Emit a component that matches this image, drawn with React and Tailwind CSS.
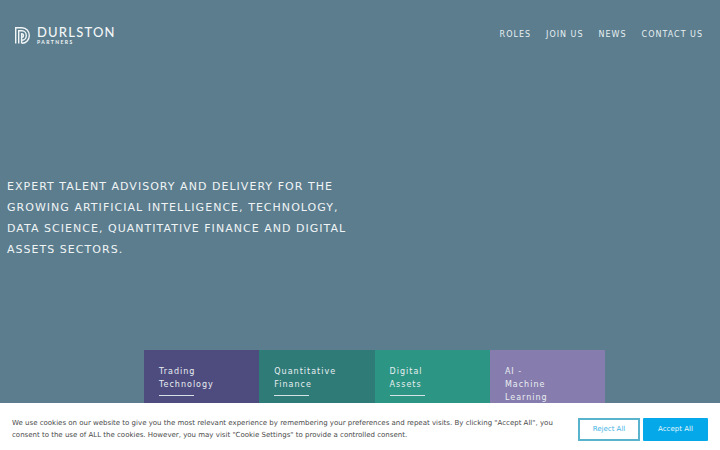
const navLinks = ['ROLES', 'JOIN US', 'NEWS', 'CONTACT US'];

const sectors = [
  { id: 'trading', lines: ['Trading', 'Technology'], bg: 'bg-[#4e4c7f]', rule: true },
  { id: 'quant', lines: ['Quantitative', 'Finance'], bg: 'bg-[#2f7b78]', rule: true },
  { id: 'digital', lines: ['Digital', 'Assets'], bg: 'bg-[#2d9583]', rule: true },
  { id: 'ai', lines: ['AI -', 'Machine', 'Learning'], bg: 'bg-[#877cae]', rule: false },
];

const Logo = () => (
  <div className="flex items-center gap-[7px]">
    <svg width="15" height="17" viewBox="0 0 15 17" fill="none" stroke="#f2f6f7" strokeWidth="1.4">
      <path d="M0.7 16.5V0.7H7C11.2 0.7 14.3 4.2 14.3 8.5C14.3 12.8 11.2 16.3 7 16.3" />
      <path d="M3.7 16.5V3.7H7C9.5 3.7 11.3 5.9 11.3 8.5C11.3 11.1 9.5 13.3 7 13.3H6.6V16.5" />
      <path d="M6.6 13.3V6.7H7C8 6.7 8.5 7.5 8.5 8.5C8.5 9.5 8 10.3 7 10.3" />
    </svg>
    <div className="flex flex-col text-[#f2f6f7] font-['Lato',sans-serif]">
      <span className="text-[13px] leading-[13px] tracking-[1.2px] font-medium">DURLSTON</span>
      <span className="text-[5px] leading-[6px] tracking-[1.45px] font-bold">PARTNERS</span>
    </div>
  </div>
);

const SectorCard = ({ sector }) => (
  <div className={`w-[115.3px] h-[100px] pt-[15px] px-[15px] ${sector.bg}`}>
    {sector.lines.map((line) => (
      <div key={line} className="text-[8px] leading-[13px] tracking-[1px] text-[#e8eff1]">
        {line}
      </div>
    ))}
    {sector.rule && <div className="w-[35px] h-px mt-[4px] bg-[#d5e3e6]" />}
  </div>
);

export default function App() {
  return (
    <div className="relative w-[720px] h-[450px] overflow-hidden bg-[#5b7d8e] font-['DejaVu_Sans',sans-serif]">
      <header className="flex items-center justify-between pt-[25px] pl-[15px] pr-[17px]">
        <Logo />
        <nav className="flex gap-[15px]">
          {navLinks.map((link) => (
            <a key={link} className="text-[8px] leading-[20px] tracking-[1px] text-[#e8eff1]">
              {link}
            </a>
          ))}
        </nav>
      </header>

      <p className="mt-[131px] ml-[7px] w-[345px] text-[11px] leading-[21px] tracking-[1.03px] text-[#f0f4f5]">
        EXPERT TALENT ADVISORY AND DELIVERY FOR THE GROWING ARTIFICIAL INTELLIGENCE, TECHNOLOGY, DATA SCIENCE, QUANTITATIVE FINANCE AND DIGITAL ASSETS SECTORS.
      </p>

      <div className="flex mt-[90px] ml-[144px]">
        {sectors.map((sector) => (
          <SectorCard key={sector.id} sector={sector} />
        ))}
      </div>

      {/* cookie bar sits over the cards */}
      <div className="absolute left-0 right-0 bottom-0 h-[47px] pt-[5px] bg-white flex items-center justify-between px-[12px]">
        <p className="w-[552px] text-[7px] leading-[12px] text-[#4a4a4a]">
          We use cookies on our website to give you the most relevant experience by remembering your preferences and repeat visits. By clicking "Accept All", you consent to the use of ALL the cookies. However, you may visit "Cookie Settings" to provide a controlled consent.
        </p>
        <div className="flex gap-[3px]">
          <button className="w-[62px] h-[23px] border-2 border-[#5ab3cd] text-[7px] text-[#3fb4e6]">Reject All</button>
          <button className="w-[65px] h-[23px] rounded-[1px] bg-[#05a8e8] text-[7px] text-[#e8f7fd]">Accept All</button>
        </div>
      </div>
    </div>
  );
}
